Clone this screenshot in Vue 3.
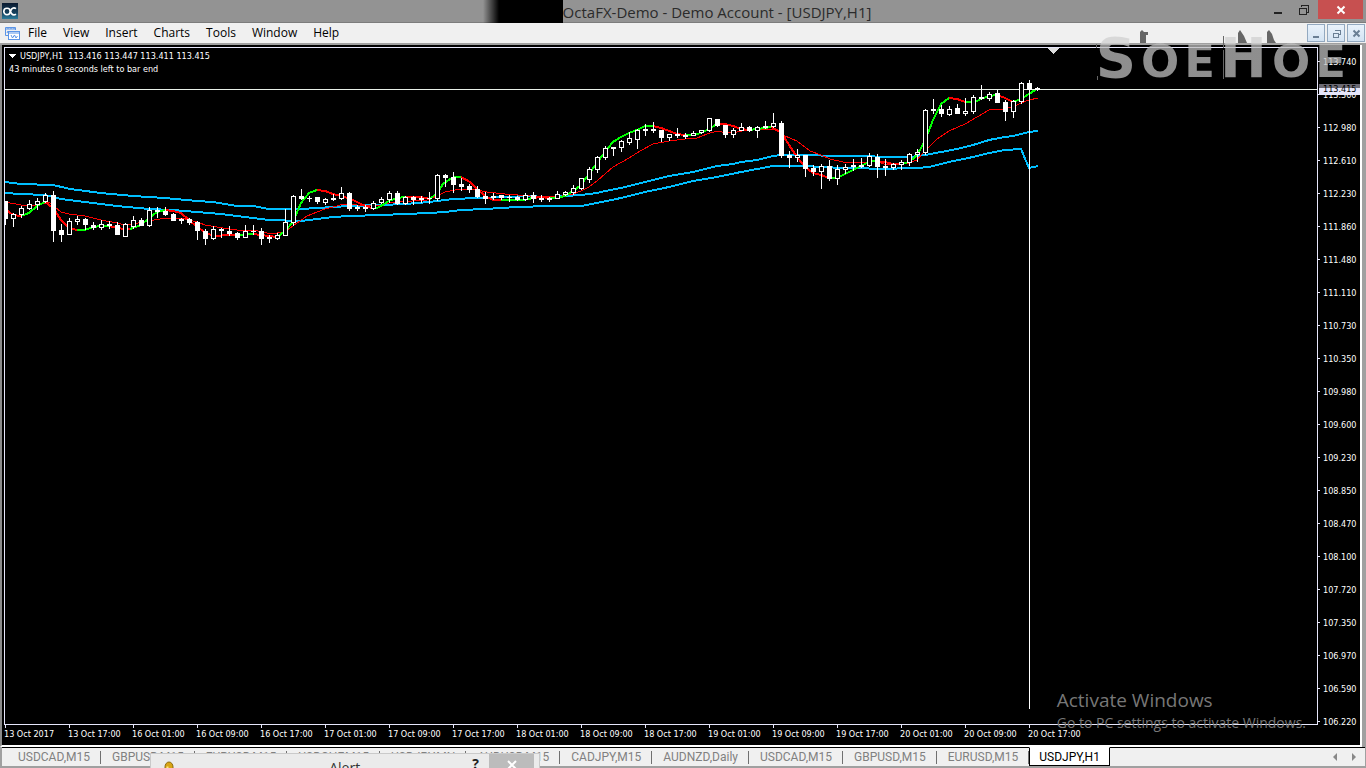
<template>
  <div class="terminal">
    <header class="titlebar">
      <svg class="app-icon" width="16" height="16" viewBox="0 0 16 16">
        <defs>
          <linearGradient id="appIconBg" x1="0" y1="0" x2="0" y2="1">
            <stop offset="0" stop-color="#0b1a30" />
            <stop offset="0.6" stop-color="#16405c" />
            <stop offset="1" stop-color="#2b7c9c" />
          </linearGradient>
        </defs>
        <rect width="16" height="16" fill="url(#appIconBg)" />
        <circle cx="5" cy="8.5" r="3.2" fill="none" stroke="#fff" stroke-width="1.6" />
        <path d="M14 5.6 A3.4 3.4 0 1 0 14 11.2" fill="none" stroke="#fff" stroke-width="1.6" />
      </svg>
      <h1 class="title">
        <span class="redacted"></span>
        <span>OctaFX-Demo - Demo Account - [USDJPY,H1]</span>
      </h1>
      <div class="window-controls">
        <button class="win-btn" aria-label="Minimize">
          <svg width="12" height="12" viewBox="0 0 12 12"><path d="M2 8h8v2H2z" fill="#222" /></svg>
        </button>
        <button class="win-btn" aria-label="Restore">
          <svg width="12" height="12" viewBox="0 0 12 12" shape-rendering="crispEdges">
            <path d="M3.5 3V1.5h7v7H9M1.5 4.5h7v6h-7zM1 4h8" fill="none" stroke="#222" />
          </svg>
        </button>
        <button class="win-btn close" aria-label="Close">
          <svg width="12" height="12" viewBox="0 0 12 12"><path d="M2.5 2.5l7 7M9.5 2.5l-7 7" stroke="#fff" stroke-width="2" /></svg>
        </button>
      </div>
    </header>

    <nav class="menubar">
      <svg class="doc-icon" width="15" height="15" viewBox="0 0 15 15" fill="none" stroke="#5b94e6">
        <path d="M10.5 4V1.5h-10v8H3M1 3h9M3 1v2M6 1v2M9 1v2M2 7l1-2 1 1" />
        <rect x="3.5" y="5.5" width="11" height="8" fill="#fff" />
        <path d="M4 7h10M6 9l1.500 3 2-3 1.500 3 1.500-2" />
      </svg>
      <button v-for="item in menu" :key="item" class="menu-item">{{ item }}</button>
      <div class="mdi-controls">
        <button class="mdi-btn" aria-label="Minimize chart">
          <svg width="11" height="11" viewBox="0 0 11 11"><path d="M2 8h6v2H2z" fill="#6a7f95" /></svg>
        </button>
        <button class="mdi-btn" aria-label="Restore chart">
          <svg width="11" height="11" viewBox="0 0 11 11" shape-rendering="crispEdges">
            <path d="M4.500 3V2.500h5v4H8M2.500 5.500h5v4h-5zM4 2h6M2 5h6" fill="none" stroke="#6a7f95" />
          </svg>
        </button>
        <button class="mdi-btn" aria-label="Close chart">
          <svg width="11" height="11" viewBox="0 0 11 11"><path d="M2.500 2.500l6 6M8.500 2.500l-6 6" stroke="#6a7f95" stroke-width="2" /></svg>
        </button>
      </div>
    </nav>

    <main class="chart">
      <section class="plot">
        <svg class="canvas" shape-rendering="crispEdges">
          <g transform="translate(-5 -48)" fill="none">
            <polyline :points="upperBand" stroke="#00bfff" stroke-width="2" />
            <polyline :points="lowerBand" stroke="#00bfff" stroke-width="2" />
            <polyline :points="slowAverage" stroke="#ff0000" />
            <polyline
              v-for="(seg, i) in fastAverage"
              :key="i"
              :points="seg"
              :stroke="i % 2 ? '#00ff00' : '#ff0000'"
              stroke-width="2"
            />
          </g>
          <line x1="0" y1="41.500" x2="100%" y2="41.500" stroke="#e8f0e8" />
          <g transform="translate(-5 -48)">
            <g v-for="c in candles" :key="c.x">
              <rect :x="c.x" :y="c.high" width="1" :height="c.low - c.high + 1" fill="#fff" />
              <rect :x="c.x - 2" :y="c.top" width="5" :height="c.bottom - c.top" fill="#fff" />
              <rect
                v-if="c.up"
                :x="c.x - 1"
                :y="c.top + 1"
                width="3"
                :height="Math.max(c.bottom - c.top - 2, 1)"
                fill="#000"
              />
            </g>
            <path d="M1048 48h11l-5.500 6z" fill="#ddd" />
            <path d="M8 54h8l-4 4z" fill="#fff" />
          </g>
        </svg>
        <div class="info">
          <p class="quote">USDJPY,H1&nbsp; 113.416 113.447 113.411 113.415</p>
          <p>43 minutes 0 seconds left to bar end</p>
        </div>
      </section>

      <aside class="price-axis">
        <div v-for="p in prices" :key="p" class="price">{{ p }}</div>
        <div class="price-tag">113.415</div>
      </aside>

      <div class="time-axis">
        <div v-for="t in times" :key="t" class="time">{{ t }}</div>
      </div>

      <div class="activation">
        <p class="activation-title">Activate Windows</p>
        <p>Go to PC settings to activate Windows.</p>
      </div>
    </main>

    <footer class="tabs">
      <button
        v-for="(tab, i) in tabs"
        :key="i"
        class="tab"
        :class="{ active: i === tabs.length - 1 }"
      >{{ tab }}</button>
      <div class="tab-scroll">
        <button aria-label="Scroll left"><svg width="5" height="8"><path d="M4 0v8L0 4z" fill="#888" /></svg></button>
        <button aria-label="Scroll right"><svg width="5" height="8"><path d="M0 0v8l4-4z" fill="#888" /></svg></button>
      </div>
    </footer>

    <div class="alert">
      <svg class="bell" width="12" height="12" viewBox="0 0 12 12">
        <path d="M2 12V6a4 5 0 0 1 8 0v6z" fill="#d9a514" stroke="#8a6a10" />
        <path d="M4.500 9V5.500" stroke="#ffe98a" stroke-width="2" />
      </svg>
      <span class="alert-title">Alert</span>
      <button class="alert-help">?</button>
      <button class="alert-close" aria-label="Close alert">
        <svg width="10" height="10" viewBox="0 0 10 10"><path d="M1 1l8 8M9 1l-8 8" stroke="#fff" stroke-width="2" /></svg>
      </button>
    </div>

    <div class="watermark">
      <span class="big">S</span><span>O</span><span>E</span><span class="big">H</span><span>O</span><span>E</span>
      <svg class="spikes" width="250" height="56" viewBox="0 0 250 56" fill="#666">
        <path d="M44 13V2l2-2 2 2h4v3h-2v8zM142 13V3l2-3 4 6 3 7zM171 13V2l2-2 3 4 2 6 2 3z" />
        <path d="M127 6h1v12h-1zM127 20h1v29h-1zM0 14h1v4H0zM1 46h1v4H1z" />
      </svg>
    </div>
  </div>
</template>

<script setup>
const menu = ['File', 'View', 'Insert', 'Charts', 'Tools', 'Window', 'Help'];

const prices = [
  '113.740', '113.360', '112.980', '112.610', '112.230', '111.860', '111.480',
  '111.110', '110.730', '110.350', '109.980', '109.600', '109.230', '108.850',
  '108.470', '108.100', '107.720', '107.350', '106.970', '106.590', '106.220'
];

const times = [
  '13 Oct 2017', '13 Oct 17:00', '16 Oct 01:00', '16 Oct 09:00', '16 Oct 17:00',
  '17 Oct 01:00', '17 Oct 09:00', '17 Oct 17:00', '18 Oct 01:00', '18 Oct 09:00',
  '18 Oct 17:00', '19 Oct 01:00', '19 Oct 09:00', '19 Oct 17:00', '20 Oct 01:00',
  '20 Oct 09:00', '20 Oct 17:00'
];

const tabs = [
  'USDCAD,M15', 'GBPUSD,M15', 'EURUSD,M15', 'USDCHF,M15', 'USDJPY,MN', 'AUDUSD,M15',
  'CADJPY,M15', 'AUDNZD,Daily', 'USDCAD,M15', 'GBPUSD,M15', 'EURUSD,M15', 'USDJPY,H1'
];

const FIRST_BAR = 5;
const BAR_STEP = 8;

// high, body top, body bottom, low, 1 = bullish (hollow)
const bars = [
  [201, 201, 219, 224, 0], [213, 214, 219, 226, 1], [206, 208, 215, 217, 1], [200, 204, 209, 209, 1],
  [198, 201, 205, 209, 1], [193, 195, 202, 202, 1], [191, 195, 231, 241, 0], [224, 230, 235, 241, 0],
  [218, 221, 235, 234, 1], [216, 219, 222, 224, 1], [218, 219, 225, 229, 0], [222, 225, 228, 229, 0],
  [220, 224, 228, 229, 1], [221, 224, 226, 228, 0], [222, 225, 235, 234, 0], [223, 224, 237, 236, 1],
  [216, 220, 227, 228, 1], [218, 220, 226, 225, 0], [207, 210, 226, 226, 1], [207, 210, 212, 217, 0],
  [207, 211, 215, 215, 0], [213, 214, 221, 220, 0], [218, 219, 221, 223, 0], [218, 219, 223, 224, 0],
  [221, 222, 231, 239, 0], [229, 231, 239, 244, 0], [226, 229, 239, 239, 1], [228, 229, 231, 237, 0],
  [226, 231, 234, 235, 0], [232, 233, 238, 239, 0], [225, 231, 238, 237, 1], [225, 231, 232, 234, 0],
  [228, 231, 239, 244, 0], [235, 237, 239, 242, 0], [233, 235, 239, 239, 1], [209, 222, 236, 235, 1],
  [195, 196, 223, 225, 1], [189, 196, 199, 199, 0], [196, 198, 199, 201, 0], [197, 197, 202, 203, 0],
  [198, 199, 203, 204, 1], [194, 198, 200, 200, 0], [187, 193, 199, 199, 1], [192, 193, 209, 210, 0],
  [205, 207, 209, 210, 0], [205, 207, 209, 211, 0], [201, 203, 209, 209, 1], [197, 199, 203, 203, 1],
  [191, 193, 200, 202, 1], [191, 193, 204, 204, 0], [196, 197, 204, 204, 1], [196, 197, 200, 204, 0],
  [196, 198, 200, 202, 0], [192, 198, 199, 203, 0], [174, 175, 199, 200, 1], [174, 175, 178, 186, 0],
  [172, 177, 185, 192, 0], [178, 184, 187, 190, 0], [184, 186, 190, 192, 0], [186, 189, 197, 197, 0],
  [192, 196, 199, 203, 0], [193, 196, 198, 199, 0], [195, 195, 198, 199, 0], [195, 197, 198, 201, 0],
  [196, 197, 200, 200, 0], [193, 195, 200, 200, 1], [192, 195, 199, 202, 0], [195, 198, 200, 201, 0],
  [197, 198, 200, 201, 0], [191, 194, 199, 198, 1], [191, 192, 195, 195, 1], [185, 188, 193, 194, 1],
  [178, 178, 189, 189, 1], [167, 169, 180, 182, 1], [156, 157, 170, 172, 1], [146, 148, 158, 159, 1],
  [147, 147, 149, 155, 0], [140, 141, 148, 151, 1], [132, 138, 143, 144, 1], [129, 130, 140, 148, 1],
  [124, 129, 131, 135, 0], [122, 129, 131, 132, 0], [130, 130, 138, 141, 0], [134, 134, 138, 140, 1],
  [128, 134, 136, 137, 0], [133, 135, 137, 138, 0], [131, 133, 136, 135, 1], [130, 130, 133, 133, 1],
  [118, 118, 131, 131, 1], [119, 119, 126, 126, 0], [125, 125, 135, 137, 0], [128, 130, 135, 137, 1],
  [123, 127, 131, 130, 1], [126, 127, 131, 131, 0], [126, 127, 131, 137, 1], [121, 126, 128, 128, 0],
  [113, 123, 127, 127, 1], [121, 123, 156, 157, 0], [151, 155, 158, 167, 0], [149, 155, 158, 161, 1],
  [155, 155, 169, 176, 0], [165, 168, 172, 175, 0], [164, 166, 172, 188, 1], [160, 166, 179, 180, 0],
  [165, 169, 179, 184, 1], [164, 167, 170, 173, 1], [159, 165, 167, 170, 0], [158, 165, 167, 167, 0],
  [153, 156, 166, 166, 1], [154, 157, 167, 177, 0], [159, 166, 168, 175, 0], [163, 164, 168, 169, 1],
  [160, 162, 165, 169, 1], [153, 154, 163, 165, 1], [149, 152, 155, 161, 1], [109, 110, 153, 154, 1],
  [99, 109, 111, 113, 0], [105, 109, 114, 116, 0], [106, 109, 115, 115, 1], [104, 108, 114, 113, 0],
  [98, 111, 114, 115, 1], [95, 97, 112, 113, 1], [85, 97, 99, 99, 0], [92, 94, 99, 100, 1],
  [90, 93, 103, 102, 0], [100, 102, 112, 120, 0], [100, 101, 112, 117, 1], [82, 83, 102, 103, 1],
  [80, 83, 90, 708, 0], [87, 88, 90, 90, 0]
];

const candles = bars.map(([high, top, bottom, low, up], i) => ({
  x: FIRST_BAR + i * BAR_STEP,
  high,
  top,
  bottom,
  low,
  up: up === 1
}));

const upperBand =
  '5,182 21,184 53,185 70,189 101,193 133,196 165,198 197,201 213,202 237,206 253,206 269,209 301,209 317,208 349,206 381,205 405,204 429,202 453,199 477,198 509,197 525,196 549,197 565,196 581,195 597,193 605,191 621,188 637,184 653,180 669,176 693,172 717,166 733,164 741,162 757,160 773,156 781,155 800,155 840,156 910,157 925,155 941,152 957,149 973,145 989,140 1005,137 1013,136 1029,132 1038,131';
const lowerBand =
  '5,193 21,194 45,195 61,199 85,202 117,206 149,209 173,210 197,212 221,214 245,217 269,220 301,221 317,219 333,217 349,216 381,215 405,214 429,213 445,212 461,210 485,209 517,207 549,206 581,206 597,203 621,198 645,192 669,187 693,181 717,177 741,172 757,169 773,166 806,166 821,167 845,168 861,168 877,169 917,168 929,167 949,162 973,157 989,153 1005,150 1021,149 1029,168 1038,166';
const slowAverage =
  '5,202 21,205 37,205 49,202 61,212 69,214 85,216 101,220 117,223 125,225 133,224 149,221 165,218 181,218 190,220 200,223 205,225 223,228 237,230 253,230 267,233 277,233 285,232 290,228 297,223 307,216 317,212 325,209 337,206 343,204 357,205 377,206 389,203 397,202 427,200 437,196 445,192 460,189 477,190 487,192 505,194 530,196 557,197 573,194 581,191 589,187 597,181 605,174 613,167 629,158 640,151 653,144 669,141 685,139 697,138 707,134 717,131 727,133 737,132 747,130 773,129 781,133 785,136 797,141 810,151 821,155 830,159 843,162 863,163 875,161 887,165 901,164 909,163 917,160 923,153 930,146 937,139 949,131 965,124 977,117 989,110 1003,109 1013,107 1021,103 1029,100 1038,98';

// the fast average changes colour on every turn: red, green, red, ...
const fastAverage = [
  '5,209 13,215 21,216',
  '21,216 29,213 37,206 45,202',
  '45,202 53,208 61,220 69,228 77,230',
  '77,230 85,230 93,227 101,226 109,226',
  '109,226 117,228 125,229 130,229',
  '130,229 133,228 141,225 149,218 157,212 165,210',
  '165,210 173,211 181,213 189,220 197,227 205,232 213,236 229,235 237,235',
  '237,235 253,234',
  '253,234 261,235 277,237',
  '277,237 285,231 293,222 301,203 309,193 317,190',
  '317,190 325,191 333,194 341,196 351,199 363,205 371,208',
  '371,208 377,208 381,206 389,201 397,198 405,197',
  '405,197 421,197 430,199',
  '430,199 437,193 443,184 450,179 455,177 461,177',
  '461,177 470,182 477,189 485,196 493,200 501,200',
  '501,200 523,200 533,198',
  '533,198 541,197 549,198',
  '549,198 557,198 565,196 573,191 581,185 589,174 597,163 605,152 613,142 621,137 629,133 637,130 645,126 653,126',
  '653,126 661,128 669,131 677,134 685,135',
  '685,135 693,135 701,133 709,129 717,124',
  '717,124 725,124 733,126 741,129 749,130',
  '749,130 757,129 765,128 771,127',
  '771,127 775,129 781,132 789,145 797,157 805,167 813,173 821,175 829,178',
  '829,178 837,178 845,174 853,170 861,166 869,162 875,161',
  '875,161 885,162 893,164 901,164',
  '901,164 909,162 915,157 920,150 923,144 928,133 933,120 941,104 949,98',
  '949,98 957,99 965,102',
  '965,102 975,102 981,99 989,96 997,95',
  '997,95 1005,98 1013,102',
  '1013,102 1021,99 1029,94 1038,88'
];
</script>

<style>
body {
  margin: 0;
  background: #a0a0a0;
}
</style>

<style scoped>
.terminal {
  position: relative;
  display: flex;
  flex-direction: column;
  height: 100vh;
  overflow: hidden;
  background: #a0a0a0;
  font-family: "Open Sans", "Noto Sans", sans-serif;
  font-size: 12px;
}
button {
  margin: 0;
  padding: 0;
  border: 0;
  background: none;
  font: inherit;
}
p {
  margin: 0;
}
.titlebar {
  display: grid;
  grid-template-columns: 1fr auto 1fr;
  height: 22px;
  border-bottom: 1px solid #7c7c7c;
  background: #939393;
}
.app-icon {
  margin: 3px 2px;
}
.title {
  display: flex;
  align-items: center;
  margin: 0;
  padding-right: 12px;
  color: #2b2b2b;
  font-size: 15px;
  font-weight: 400;
  line-height: 22px;
  white-space: nowrap;
}
.redacted {
  width: 80px;
  height: 23px;
  background: linear-gradient(90deg, transparent, #000 16px);
}
.window-controls {
  display: flex;
  justify-content: flex-end;
  align-items: flex-start;
  padding-right: 3px;
}
.win-btn {
  display: flex;
  align-items: center;
  justify-content: center;
  width: 26px;
  height: 19px;
}
.win-btn.close {
  width: 45px;
  margin-left: 1px;
  background: #c75050;
}
.menubar {
  display: flex;
  align-items: center;
  gap: 16px;
  height: 20px;
  padding-left: 5px;
  border-bottom: 2px solid #a0a0a0;
  background: #f0f0f0;
}
.doc-icon {
  margin-right: -8px;
}
.menu-item {
  color: #000;
  line-height: 20px;
}
.mdi-controls {
  display: flex;
  gap: 2px;
  margin-left: auto;
  padding-right: 1px;
}
.mdi-btn {
  display: flex;
  align-items: center;
  justify-content: center;
  width: 18px;
  height: 18px;
  border: 1px solid #93a9c0;
  background: linear-gradient(#e9f2fb, #d3e3f3);
}
.chart {
  position: relative;
  flex: 1;
  display: grid;
  grid-template-columns: 1fr 42px;
  grid-template-rows: 1fr 20px;
  min-height: 0;
  margin-right: 4px;
  padding: 2px 0 0 2px;
  border-left: 2px solid #8a8a8a;
  border-right: 2px solid #fff;
  border-bottom: 2px solid #fff;
  background: #000;
  color: #fff;
  font-family: "DejaVu Sans Condensed", "DejaVu Sans", sans-serif;
  font-size: 9px;
}
.plot {
  position: relative;
  min-width: 0;
  min-height: 0;
  border: 1px solid #e6e6fa;
}
.canvas {
  position: absolute;
  width: 100%;
  height: 100%;
}
.info {
  position: relative;
  padding: 2px 4px;
  line-height: 13px;
}
.quote {
  padding-left: 11px;
}
.price-axis {
  position: relative;
  grid-row: 1 / 3;
  grid-column: 2;
  min-height: 0;
  margin-top: -2px;
}
.price {
  display: flex;
  align-items: center;
  gap: 3px;
  height: 33px;
}
.price::before {
  content: "";
  width: 2px;
  height: 1px;
  background: #e6e6fa;
}
.price-tag {
  position: absolute;
  top: 39px;
  left: 1px;
  right: 0;
  padding-left: 4px;
  background: linear-gradient(#6c6a74 4px, #e6e6fa 4px);
  color: #000;
  line-height: 11px;
}
.time-axis {
  display: flex;
  min-width: 0;
  overflow: hidden;
}
.time {
  position: relative;
  flex: 0 0 64px;
  line-height: 18px;
  white-space: nowrap;
}
.time::before {
  content: "";
  position: absolute;
  top: 0;
  left: 1px;
  width: 1px;
  height: 3px;
  background: #e6e6fa;
}
.activation {
  position: absolute;
  right: 54px;
  bottom: 12px;
  color: #777;
  font-family: "Open Sans", "Noto Sans", sans-serif;
  font-size: 14px;
  line-height: 20px;
}
.activation-title {
  font-size: 19px;
  line-height: 26px;
}
.tabs {
  display: flex;
  height: 18px;
  margin: 0 1px 2px 2px;
  padding-left: 5px;
  border-top: 1px solid #000;
  background: #f0f0f0;
  font-family: Roboto, "Open Sans", sans-serif;
}
.tab {
  position: relative;
  padding: 0 11px;
  color: #808080;
  line-height: 18px;
  white-space: nowrap;
}
.tab::after {
  content: "";
  position: absolute;
  top: 3px;
  right: 0;
  width: 1px;
  height: 13px;
  background: #707070;
}
.tab.active {
  margin-top: -1px;
  padding: 0 9px;
  border: 1px solid #000;
  border-top-color: #fff;
  background: #fff;
  color: #000;
}
.tab.active::after {
  display: none;
}
.tab-scroll {
  display: flex;
  align-items: center;
  gap: 14px;
  margin-left: auto;
  padding-right: 8px;
}
.tab-scroll button {
  display: flex;
}
.alert {
  position: absolute;
  left: 150px;
  bottom: 0;
  display: flex;
  align-items: flex-start;
  width: 383px;
  height: 14px;
  padding-right: 5px;
  overflow: hidden;
  border: 1px solid #cacaca;
  border-bottom: 0;
  background: #ebebeb;
}
.bell {
  margin: 7px 0 0 12px;
}
.alert-title {
  flex: 1;
  padding: 4px 0 0 42px;
  color: #333;
  font-size: 14px;
  line-height: 20px;
  text-align: center;
}
.alert-help {
  margin-right: 10px;
  color: #222;
  font-size: 14px;
  font-weight: 700;
  line-height: 20px;
}
.alert-close {
  display: flex;
  justify-content: center;
  width: 45px;
  height: 14px;
  padding-top: 6px;
  background: #bcbcbc;
}
.watermark {
  position: absolute;
  top: 30px;
  right: 20px;
  display: flex;
  align-items: baseline;
  gap: 5px;
  height: 56px;
  background: linear-gradient(#d8d8d8 13px, rgba(190, 190, 190, 0.75) 14px);
  background-clip: text;
  color: transparent;
  font-family: "DejaVu Sans", sans-serif;
  font-size: 45px;
  font-weight: 700;
  line-height: 56px;
  pointer-events: none;
}
.watermark .big {
  font-size: 56px;
}
.spikes {
  position: absolute;
  top: 0;
  left: 0;
}
</style>
